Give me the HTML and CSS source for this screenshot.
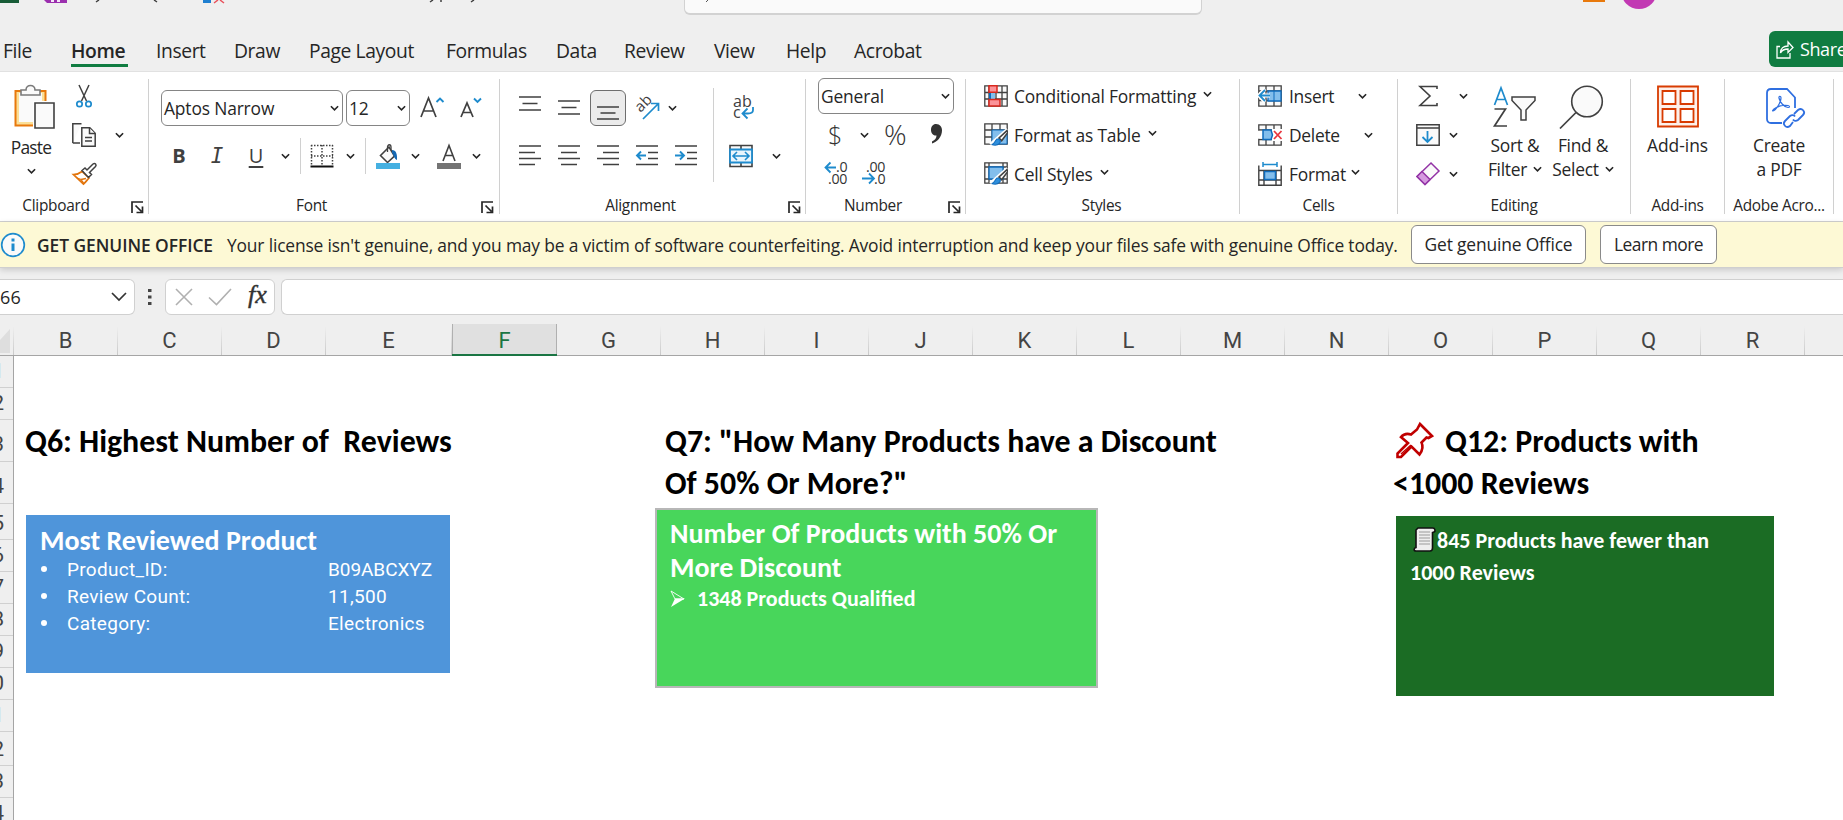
FILE: index.html
```html
<!DOCTYPE html>
<html lang="en">
<head>
<meta charset="utf-8">
<title>Excel</title>
<link rel="stylesheet" href="styles.css">
</head>
<body>
<svg class="defs" width="0" height="0">
  <symbol id="chev" viewBox="0 0 10 6"><path d="M1 1l4 4 4-4" fill="none" stroke="#262626" stroke-width="1.8"/></symbol>
  <symbol id="launch" viewBox="0 0 13 13"><path d="M1 12V1h11M4.500 4.500l6 6M11.500 5.500v6h-6" fill="none" stroke="#262626" stroke-width="1.7"/></symbol>
  <symbol id="brush" viewBox="0 0 16 16"><path d="M15.500 1.500L8 8.500l2.500 2.500 6-8z" fill="#fafafa" stroke="#404040" stroke-width="1.500"/><path d="M1 14.500c3 0 3-3.500 5-5 3-.5 4 2 2.500 4-2 2-5 2-7.500 1z" fill="#2f8fdc" stroke="#0f6cbd"/></symbol>
</svg>

<header class="titlebar">
  <svg class="quick" width="500" height="4" viewBox="0 0 500 4">
    <path d="M0 0h19v3H0z" fill="#185c37"/><path d="M44 0h23v3H47z" fill="#9b2fae"/><path d="M51 0h3v2h-3zM57 0h3v2h-3z" fill="#f5e6f7"/>
    <path d="M99 0l-3 2M154 0l3 2M433 0l-3 2M441 0v2M474 0l-3 2" stroke="#404040" stroke-width="1.500" fill="none"/>
    <path d="M203 0h8v3h-8z" fill="#1f7fd0"/><path d="M218 0l-4 3M220 0l4 3" stroke="#e8505b" stroke-width="1.500"/>
  </svg>
  <div class="search"><svg width="4" height="2"><path d="M3 0L1 2" stroke="#555"/></svg></div>
  <i class="warn"></i><i class="avatar"></i>
</header>

<nav class="tabs">
  <span>File</span><span class="on">Home</span><span>Insert</span><span>Draw</span><span>Page Layout</span><span>Formulas</span><span>Data</span><span>Review</span><span>View</span><span>Help</span><span>Acrobat</span>
  <button class="share"><svg width="18" height="19" viewBox="0 0 18 19"><path d="M4 6.500H1V18h13v-5M4.500 13c0-5 3-7 7.500-7V2l5 5.500-5 5V9c-4 0-6 1-7.500 4z" fill="none" stroke="#fff" stroke-width="1.300"/></svg>Share</button>
</nav>

<section class="ribbon">
  <div class="group clip">
    <div class="body">
      <div class="big paste">
        <svg width="42" height="46" viewBox="0 0 42 46"><path d="M1.500 7h30v34.500h-30z" fill="#fbdf97" stroke="#e8790c" stroke-width="2"/><path d="M5 9h23v29H5z" fill="#fafafa"/><path d="M7 11V6h5c0-6 9-6 9 0h5v5z" fill="#fafafa" stroke="#7a7a7a" stroke-width="1.600"/><path d="M19 17h22v28H19z" fill="#fff"/><path d="M21 19h19v25H21z" fill="#fafafa" stroke="#404040" stroke-width="1.600"/></svg>
        <span>Paste</span>
        <svg class="chev"><use href="#chev"/></svg>
      </div>
      <div class="three">
        <div class="row"><svg width="24" height="24" viewBox="0 0 24 24"><path d="M7 1l7.500 16M17 1L9.500 17" stroke="#404040" stroke-width="1.500"/><g fill="#fff" stroke="#1e8bcd" stroke-width="1.700"><circle cx="7.500" cy="20" r="2.700"/><circle cx="16.500" cy="20" r="2.700"/></g></svg></div>
        <div class="row"><svg width="24" height="24" viewBox="0 0 24 24"><g fill="#fafafa" stroke="#404040" stroke-width="1.500"><path d="M.8 20V.8H9.500M.8 20H8"/><path d="M9.800 4.800h8l5.400 5.400v13H9.800z"/><path d="M17.500 5v5.500H23M13 14.500h7M13 18h7"/></g></svg><svg class="chev"><use href="#chev"/></svg></div>
        <div class="row"><svg width="25" height="24" viewBox="0 0 25 24"><path d="M1.500 12.500c4 0 6-1 8.500-3l7 6.500c-2 2-3 4-5.500 6z" fill="#fff" stroke="#e2740c" stroke-width="1.700"/><path d="M5 16l4 1.500 2.500 3.500M9 17.500l5-1" fill="none" stroke="#e2740c" stroke-width="1.300"/><path d="M10 8.500l3-2.500 2 2 6-6c2-1.500 4 .5 2.500 2.500l-6 6 2 2-3 3z" fill="#fff" stroke="#404040" stroke-width="1.500"/></svg></div>
      </div>
    </div>
    <footer><span>Clipboard</span><svg class="launch"><use href="#launch"/></svg></footer>
  </div>

  <div class="group font">
    <div class="two">
      <div class="row"><div class="combo name">Aptos Narrow<svg class="chev"><use href="#chev"/></svg></div><div class="combo size">12<svg class="chev"><use href="#chev"/></svg></div>
        <svg class="grow" width="24" height="24" viewBox="0 0 24 24"><path d="M1 21L8.500 2l7.500 19M3.500 15h10" fill="none" stroke="#404040" stroke-width="1.700"/><path d="M16.500 6L20 2.500 23.500 6" fill="none" stroke="#1e8bcd" stroke-width="1.900"/></svg>
        <svg class="shrink" width="22" height="24" viewBox="0 0 22 24"><path d="M1 21L7 7l6 14M3 16.500h8" fill="none" stroke="#404040" stroke-width="1.700"/><path d="M14 2.500l3.500 3.500L21 2.500" fill="none" stroke="#1e8bcd" stroke-width="1.900"/></svg></div>
      <div class="row r2"><b>B</b><em>I</em><u>U</u><svg class="chev c1"><use href="#chev"/></svg><i class="vline v1"></i>
        <svg class="border" width="24" height="24" viewBox="0 0 24 24"><path d="M1 1.500h22M1.500 1v20M22.500 1v20M12 1v20M1 12h22" fill="none" stroke="#404040" stroke-width="1.500" stroke-dasharray="1.500 1.500"/><path d="M.5 22.500h23" stroke="#111" stroke-width="2"/></svg><svg class="chev c2"><use href="#chev"/></svg><i class="vline v2"></i>
        <svg class="fill" width="24" height="25" viewBox="0 0 24 25"><path d="M4.500 11.500L13 3l5.500 9-7 6.500z" fill="#fafafa" stroke="#404040" stroke-width="1.600"/><path d="M11.500 8V3c0-3 3.500-3 3.500 0v3" fill="none" stroke="#404040" stroke-width="1.300"/><path d="M16 6c4 0 5.500 4 5 10-3-1-3-5-5-7z" fill="#1668b3"/><path d="M0 19h24v6H0z" fill="#45b0e1"/></svg><svg class="chev c3"><use href="#chev"/></svg>
        <svg class="color" width="24" height="25" viewBox="0 0 24 25"><path d="M6 17l6-15.500L18 17M8 11.500h8" fill="none" stroke="#404040" stroke-width="1.600"/><path d="M0 19h24v6H0z" fill="#747474"/></svg><svg class="chev c4"><use href="#chev"/></svg></div>
    </div>
    <footer><span>Font</span><svg class="launch"><use href="#launch"/></svg></footer>
  </div>

  <div class="group align">
    <div class="two">
      <div class="row"><svg class="al" viewBox="0 0 22 24"><path d="M0 1h22M3.500 7.500h15M0 14h22"/></svg><svg class="al" viewBox="0 0 22 24"><path d="M0 5h22M3.500 11.500h15M0 18h22"/></svg><span class="sel"><svg class="al" viewBox="0 0 22 24"><path d="M0 11h22M3.500 17h15M0 23h22"/></svg></span>
        <svg class="orient" width="26" height="26" viewBox="0 0 26 26"><text transform="translate(6.500 18) rotate(-45)" class="glyph">ab</text><path d="M9 24L24 9M17 8.500h7.500V16" fill="none" stroke="#1e8bcd" stroke-width="1.700"/></svg><svg class="chev c5"><use href="#chev"/></svg></div>
      <div class="row"><svg class="al" viewBox="0 0 22 24"><path d="M0 2h22M0 8.500h16M0 14.500h22M0 20.500h16"/></svg><svg class="al" viewBox="0 0 22 24"><path d="M0 2h22M3 8.500h16M0 14.500h22M3 20.500h16"/></svg><svg class="al" viewBox="0 0 22 24"><path d="M0 2h22M6 8.500h16M0 14.500h22M6 20.500h16"/></svg><svg class="al" viewBox="0 0 22 24"><path d="M0 2h22M12 8.500h10M12 14.500h10M0 20.500h22"/><path class="blue" d="M10 11.500H1M5 7.500l-4 4 4 4"/></svg><svg class="al" viewBox="0 0 22 24"><path d="M0 2h22M12 8.500h10M12 14.500h10M0 20.500h22"/><path class="blue" d="M0 11.500h9M5 7.500l4 4-4 4"/></svg></div>
    </div>
    <i class="mid"></i>
    <div class="two wrapcol">
      <div class="row"><svg width="26" height="26" viewBox="0 0 26 26"><text x="4" y="12" class="glyph wide">ab</text><text x="4" y="23" class="glyph wide">c</text><path d="M24 12v3c0 3-2 3.500-5 3.500h-5M18.500 13.500l-5 5 5 5" fill="none" stroke="#1e8bcd" stroke-width="1.800"/></svg></div>
      <div class="row"><svg width="24" height="24" viewBox="0 0 24 24"><path d="M1 1.500h22v21H1zM12 1v4M12 19v4" fill="#fafafa" stroke="#404040" stroke-width="1.600"/><path d="M1 5.500h22v13H1z" fill="#eaf5fc" stroke="#1e8bcd" stroke-width="1.800"/><path d="M4.500 12h15M8 8l-4 4 4 4M16 8l4 4-4 4" fill="none" stroke="#1e8bcd" stroke-width="1.600"/></svg><svg class="chev"><use href="#chev"/></svg></div>
    </div>
    <footer><span>Alignment</span><svg class="launch"><use href="#launch"/></svg></footer>
  </div>

  <div class="group number">
    <div class="three">
      <div class="row"><div class="combo gen">General<svg class="chev"><use href="#chev"/></svg></div></div>
      <div class="row"><span class="dollar">$</span><svg class="chev"><use href="#chev"/></svg><span class="pct">%</span><svg class="comma" width="13" height="20" viewBox="0 0 13 20"><path d="M6 0c4 0 6 3 6 6.500C12 13 7 18 2 19.500v-2c3-1.500 4.500-3.500 4.500-6C3 12 1 9 1 6c0-3.500 2-6 5-6z" fill="#333"/></svg></div>
      <div class="row dec"><svg width="26" height="25" viewBox="0 0 26 25"><text x="12" y="11" class="num">.0</text><text x="4" y="23" class="num">.00</text><path d="M12 6.500H1.500M6.500 1.500l-5 5 5 5" fill="none" stroke="#1e8bcd" stroke-width="1.800"/></svg><svg width="26" height="25" viewBox="0 0 26 25"><text x="4" y="11" class="num">.00</text><text x="12" y="23" class="num">.0</text><path d="M0 17.500h11.500M7 12.500l5 5-5 5" fill="none" stroke="#1e8bcd" stroke-width="1.800"/></svg></div>
    </div>
    <footer><span>Number</span><svg class="launch"><use href="#launch"/></svg></footer>
  </div>

  <div class="group styles">
    <div class="three">
      <div class="row"><svg width="24" height="22" viewBox="0 0 24 22"><path d="M.8.800h22.400v20.400H.8zM5 1v20M18 1v20M1 7.500h22M1 14h22M12 1v20" fill="#fafafa" stroke="#404040" stroke-width="1.300"/><path d="M5 7h6v7H5z" fill="#83beec"/><path d="M5 7h2v7H5z" fill="#0f6cbd"/><path d="M5 .8h8v6.500H5zM5 14.500h11v6.500H5z" fill="#fb9399" stroke="#d9281e" stroke-width="1.500"/></svg><span>Conditional Formatting</span><svg class="chev"><use href="#chev"/></svg></div>
      <div class="row"><svg width="24" height="23" viewBox="0 0 24 23"><path d="M.8.800h22.400v20.400H.8zM8 1v20M16 1v20M1 7h22M1 14h22" fill="#fafafa" stroke="#404040" stroke-width="1.300"/><path d="M8 7h15v14H8z" fill="#83beec" stroke="#0f6cbd"/><path d="M24 7L7 22" stroke="#fff" stroke-width="5"/><use href="#brush" x="6" y="6" width="18" height="17"/></svg><span>Format as Table</span><svg class="chev"><use href="#chev"/></svg></div>
      <div class="row"><svg width="24" height="23" viewBox="0 0 24 23"><path d="M.8.800h22.400v20.400H.8zM5 1v20M19 1v20M1 5h22M1 17h22" fill="#fafafa" stroke="#404040" stroke-width="1.300"/><path d="M5 5h14v12H5z" fill="#83beec" stroke="#0f6cbd" stroke-width="1.300"/><path d="M24 7L7 22" stroke="#fff" stroke-width="5"/><use href="#brush" x="6" y="6" width="18" height="17"/></svg><span>Cell Styles</span><svg class="chev"><use href="#chev"/></svg></div>
    </div>
    <footer><span>Styles</span></footer>
  </div>

  <div class="group cells">
    <div class="three">
      <div class="row"><svg width="24" height="22" viewBox="0 0 24 22"><path d="M.8.800h22.400v20.400H.8zM8 1v20M16 1v20M1 6h22M1 15.500h22" fill="#fafafa" stroke="#404040" stroke-width="1.300"/><path d="M10 6h13v10H10z" fill="#83beec" stroke="#0f6cbd" stroke-width="1.300"/><path d="M16 6v10" stroke="#0f6cbd"/><path d="M1 10.500h11M7 4l-6 6.500L7 17" stroke="#fff" stroke-width="4" fill="none"/><path d="M12 10.500H1.500M7 5l-5.500 5.500L7 16" fill="none" stroke="#1e8bcd" stroke-width="1.800"/></svg><span>Insert</span><svg class="chev far"><use href="#chev"/></svg></div>
      <div class="row"><svg width="24" height="22" viewBox="0 0 24 22"><path d="M.8.800h22.400v20.400H.8zM8 1v20M16 1v20M1 6h22M1 15.500h22" fill="#fafafa" stroke="#404040" stroke-width="1.300"/><path d="M0 6.700h5v8H0zM14 5h10v12H14z" fill="#fff"/><path d="M5 6h8l1.500 5-1.500 4.500H5z" fill="#83beec" stroke="#0f6cbd" stroke-width="1.500"/><path d="M16 7l7.500 8M23.500 7L16 15" stroke="#e8363f" stroke-width="1.800"/></svg><span>Delete</span><svg class="chev far"><use href="#chev"/></svg></div>
      <div class="row"><svg width="24" height="24" viewBox="0 0 24 24"><path d="M.8 3.500v19.700h22.400V3.500M6 8v15M18 8v15M1 8.500h22M1 18h22" fill="none" stroke="#404040" stroke-width="1.400"/><path d="M6.500 9.500h11v8h-11z" fill="#83beec" stroke="#0f6cbd" stroke-width="1.500"/><path d="M5 2.500h14M5 0v5M19 0v5" stroke="#1e8bcd" stroke-width="1.500"/></svg><span>Format</span><svg class="chev"><use href="#chev"/></svg></div>
    </div>
    <footer><span>Cells</span></footer>
  </div>

  <div class="group editing">
    <div class="three">
      <div class="row"><svg width="24" height="22" viewBox="0 0 24 22"><path d="M21 4V1.500H4l10 9.500L4 20.500h17V18" fill="none" stroke="#404040" stroke-width="1.600"/></svg><svg class="chev s1"><use href="#chev"/></svg></div>
      <div class="row"><svg width="24" height="22" viewBox="0 0 24 22"><path d="M.8.800h22.400v20.400H.8zM1 4h22" fill="#fafafa" stroke="#404040" stroke-width="1.500"/><path d="M11.500 7v11M6.500 13l5 5 5-5" fill="none" stroke="#1e8bcd" stroke-width="1.800"/></svg><svg class="chev s2"><use href="#chev"/></svg></div>
      <div class="row"><svg width="24" height="24" viewBox="0 0 24 24"><path d="M1 14.500L15 1l8 8L9 22.500z" fill="#fafafa" stroke="#9333a6" stroke-width="1.500"/><path d="M1 14.500L6 9.500l8 8-5 5z" fill="#d59adf" stroke="#9333a6" stroke-width="1.500"/></svg><svg class="chev s2"><use href="#chev"/></svg></div>
    </div>
    <div class="big sort">
      <svg width="44" height="44" viewBox="0 0 44 44"><path d="M1.500 20L8 3l6.500 17M3.500 14.500h9" fill="none" stroke="#1e8bcd" stroke-width="1.700"/><path d="M1.500 24h11L1.500 41H14" fill="none" stroke="#404040" stroke-width="1.700"/><path d="M19 12h23v3.500L33 25v10h-5V25l-9-9.500z" fill="#fafafa" stroke="#404040" stroke-width="1.500"/></svg>
      <span>Sort &amp;</span><span>Filter <svg class="chev"><use href="#chev"/></svg></span>
    </div>
    <div class="big find">
      <svg width="46" height="44" viewBox="0 0 46 44"><circle cx="29" cy="16.500" r="15.300" fill="#fafafa" stroke="#404040" stroke-width="1.600"/><path d="M18 27.500L2 43.500" stroke="#404040" stroke-width="1.700"/></svg>
      <span>Find &amp;</span><span>Select <svg class="chev"><use href="#chev"/></svg></span>
    </div>
    <footer><span>Editing</span></footer>
  </div>

  <div class="group addins">
    <div class="big">
      <svg width="42" height="44" viewBox="0 0 42 44"><path d="M1 1.500h40v40H1z" fill="#fdf0ea" stroke="#d83b01" stroke-width="1.800"/><path d="M5.500 6h13v13h-13zM23.500 6h13v13h-13zM5.500 24h13v13h-13zM23.500 24h13v13h-13z" fill="#fff" stroke="#d83b01" stroke-width="1.800"/></svg>
      <span>Add-ins</span>
    </div>
    <footer><span>Add-ins</span></footer>
  </div>

  <div class="group pdf">
    <div class="big">
      <svg width="40" height="44" viewBox="0 0 40 44"><g fill="none" stroke="#2f6fe0" stroke-width="1.800"><path d="M16 38H5c-2.500 0-4-1.500-4-4V8c0-2.500 1.500-4 4-4h16l8 8.500V23"/><path d="M7 26c3-.5 8-9 8-13 0-2.500-2.500-2-2 0 1 4.500 5 9 9 9.500 2 0 2-1.500 0-2-5-1-11 1-14 3.500-1 1-2 2-1 2z" stroke-width="1.200"/><path d="M28 29l4-4c4-3 8 2 5 5l-5 5c-2 1.500-4 1-5-.5M27 37l-3 4c-4 3-8-2-5-5l5-5c2-1.500 4-1 5 .5"/></g></svg>
      <span>Create</span><span>a PDF</span>
    </div>
    <footer><span>Adobe Acro...</span></footer>
  </div>
</section>

<div class="notice">
  <svg width="26" height="26" viewBox="0 0 26 26"><circle cx="13" cy="13" r="11.300" fill="#fafafa" stroke="#1e8bcd" stroke-width="1.700"/><path d="M13 6.500v3M13 11.500V19" stroke="#1e8bcd" stroke-width="3"/></svg>
  <b>GET GENUINE OFFICE</b><span>Your license isn't genuine, and you may be a victim of software counterfeiting. Avoid interruption and keep your files safe with genuine Office today.</span>
  <button class="get">Get genuine Office</button><button class="learn">Learn more</button>
</div>

<div class="formula">
  <div class="namebox"><span>66</span><svg width="16" height="10" viewBox="0 0 16 10"><path d="M1 1l7 7 7-7" fill="none" stroke="#333" stroke-width="1.700"/></svg></div>
  <svg width="4" height="18" viewBox="0 0 4 18"><path d="M0 1h3.500v3H0zM0 7.500h3.500v3H0zM0 14h3.500v3H0z" fill="#444"/></svg>
  <div class="fx"><svg width="18" height="18" viewBox="0 0 18 18"><path d="M1 1l16 16M17 1L1 17" stroke="#b0b0b0" stroke-width="1.600"/></svg><svg width="24" height="18" viewBox="0 0 24 18"><path d="M1 9.500L8.500 16.500 23 1" fill="none" stroke="#b0b0b0" stroke-width="1.600"/></svg><i>fx</i></div>
  <div class="input"></div>
</div>

<div class="cols"><div class="corner"><svg width="10" height="24"><path d="M10 0v24H0V11z" fill="#dedede"/></svg></div><div>B</div><div>C</div><div>D</div><div class="e">E</div><div class="f">F</div><div>G</div><div>H</div><div>I</div><div>J</div><div>K</div><div>L</div><div>M</div><div>N</div><div>O</div><div>P</div><div>Q</div><div>R</div><div></div></div>

<main class="grid">
  <div class="rows"><div>1</div><div>2</div><div class="tall">3</div><div class="tall">4</div><div class="r5">5</div><div>6</div><div>7</div><div>8</div><div>9</div><div>10</div><div>11</div><div class="r12">12</div><div>13</div><div>14</div></div>
  <div class="sheet">
    <h2 class="q6">Q6: Highest Number of&nbsp; Reviews</h2>
    <h2 class="q7">Q7: "How Many Products have a Discount<br>Of 50% Or More?"</h2>
    <h2 class="q12"><svg width="38" height="37" viewBox="0 0 38 37"><path d="M24 2l12 12-3.500 2-2-.5-5 5c2 4 1 8-2 12l-8-8L5 35H1.500v-3.500L12 21 5 15c3-3.500 7-3.500 10-2.500l6-5z" fill="none" stroke="#c00000" stroke-width="2.600"/><path d="M5 32l10-9" stroke="#c00000" stroke-width="1.500"/></svg>Q12: Products with<br>&lt;1000 Reviews</h2>
    <article class="card blue">
      <h3>Most Reviewed Product</h3>
      <ul><li><span>Product_ID:</span><span class="id">B09ABCXYZ</span></li><li><span>Review Count:</span><span>11,500</span></li><li><span>Category:</span><span>Electronics</span></li></ul>
    </article>
    <article class="card green">
      <h3>Number Of Products with 50% Or<br>More Discount</h3>
      <p><svg width="15" height="17" viewBox="0 0 15 17"><path d="M1 1l13 8-9 0z" fill="none" stroke="#fff" stroke-width=".9"/><path d="M5 8.500h10L1 17z" fill="#fff"/></svg>1348 Products Qualified</p>
    </article>
    <article class="card dark">
      <p><svg width="24" height="25" viewBox="0 0 24 25"><path d="M5 1h14.500c3 0 3 3.500 1.500 4l-1.500.5V21c0 2-1 3-2.500 3H3c-2.500 0-2.500-3 0-3.500V3z" fill="#eee" stroke="#111" stroke-width="1.600"/><path d="M6 5h11M6 8h11M6 11h11M6 14h11M6 17h11" stroke="#999" stroke-width="1.200"/></svg>845 Products have fewer than<br>1000 Reviews</p>
    </article>
  </div>
</main>
</body>
</html>
```
FILE: styles.css
```css
* { box-sizing: border-box; }
body { margin: 0; width: 1843px; height: 820px; overflow: hidden; background: #fff; font: 17.4px/24px "Open Sans", "Noto Sans", sans-serif; letter-spacing: -.28px; color: #262626; }
svg { display: block; flex: none; overflow: visible; }
.defs { position: absolute; }
button { font: inherit; letter-spacing: inherit; color: inherit; padding: 0; }
.chev { width: 9px; height: 6px; }
.launch { width: 13px; height: 13px; }

.titlebar { display: flex; align-items: flex-start; height: 31px; background: #efefef; }
.quick { width: 500px; }
.search { width: 518px; height: 15px; margin-left: 184px; padding-left: 20px; background: #fafafa; border: 1px solid #d2d2d2; border-top: 0; border-bottom-width: 2px; border-radius: 0 0 6px 6px; }
.warn { width: 22px; height: 2px; margin-left: 381px; background: #e8790c; }
.avatar { width: 36px; height: 9px; margin-left: 16px; background: #c239b3; clip-path: circle(18px at 50% -9px); }

.tabs { display: grid; grid-template-columns: 69px 84px 78px 75px 137px 110px 68px 90px 72px 68px 1fr 74px; height: 41px; padding-left: 3px; background: #efefef; border-bottom: 1px solid #e1e1e1; font-size: 19.3px; line-height: 40px; letter-spacing: -.4px; }
.tabs span { height: 36px; }
.tabs .on { justify-self: start; font-weight: 600; width: 57px; margin-left: -1px; border-bottom: 3px solid #107c41; }
.share { display: flex; align-items: center; gap: 6px; height: 36px; padding-left: 7px; background: #107c41; border: 0; border-radius: 6px 0 0 6px; color: #fff; font-size: 18px; overflow: hidden; }

.ribbon { display: flex; height: 150px; background: #fff; border-bottom: 1px solid #d0d0d0; padding-top: 7px; }
.group { display: grid; grid-template-rows: 112px 22px; align-content: start; height: 135px; border-right: 1px solid #d0d0d0; flex: none; }
.group footer { grid-column: 1 / -1; display: flex; justify-content: center; line-height: 22px; font-size: 15.4px; letter-spacing: -.28px; padding-top: 4px; position: relative; }
.group footer .launch { position: absolute; right: 4px; bottom: -1px; }
.row { display: flex; align-items: center; }
.three { display: grid; grid-template-rows: 39px 39px 39px; margin-top: -3px; align-content: start; }
.two { display: grid; grid-template-rows: 48px 48px; margin-top: 5px; align-content: start; }
.big { display: flex; flex-direction: column; align-items: center; padding-top: 6px; white-space: nowrap; }
.big span { display: flex; align-items: center; gap: 6px; }
.combo { display: flex; align-items: center; justify-content: space-between; height: 36px; padding: 0 3px 0 2px; border: 1px solid #858585; border-radius: 6px; letter-spacing: -.15px; }

.clip { width: 149px; }
.clip .body { display: flex; }
.paste { width: 62px; padding-top: 5px; }
.paste > svg:first-child { margin-left: 8px; }
.paste span { line-height: 34px; letter-spacing: -.8px; }
.paste .chev { margin-top: 4px; }
.clip .three { margin-left: 10px; }
.clip .three .chev { margin-left: 19px; }
.clip footer { padding-right: 36px; }

.font { width: 351px; padding-left: 12px; }
.name { width: 182px; }
.size { width: 64px; margin-left: 3px; }
.grow { margin-left: 10px; }
.shrink { margin-left: 16px; }
.r2 b, .r2 em, .r2 u { font-size: 20px; line-height: 24px; color: #404040; text-align: center; letter-spacing: 0; }
.r2 b { width: 16px; margin-left: 10px; }
.r2 em { width: 16px; margin-left: 22px; font: italic 21px/24px "DejaVu Sans Mono", monospace; }
.r2 u { width: 16px; margin-left: 23px; text-underline-offset: 3px; text-decoration-thickness: 1.500px; }
.c1 { margin-left: 17px; }
.vline { width: 1px; height: 36px; background: #d0d0d0; }
.v1 { margin-left: 10px; }
.border { margin-left: 9px; }
.c2 { margin-left: 12px; }
.v2 { margin-left: 10px; }
.fill { margin-left: 10px; }
.c3 { margin-left: 11px; }
.color { margin-left: 17px; }
.c4 { margin-left: 11px; }
.font footer { margin-left: -12px; padding-right: 25px; }
.font footer .launch { right: 5px; }

.align { width: 306px; padding-left: 19px; grid-template-columns: 194px 1px 1fr; }
.al { width: 22px; height: 24px; margin-right: 17px; fill: none; stroke: #404040; stroke-width: 1.700; }
.al .blue { stroke: #1e8bcd; stroke-width: 1.900; }
.sel { width: 36px; height: 36px; margin-left: -7px; padding: 5px 0 0 6px; border: 1px solid #6e6e6e; border-radius: 6px; background: #ebebeb; }
.orient { margin-left: 8px; }
.glyph { font: 15px "Open Sans", sans-serif; letter-spacing: 0; fill: #404040; }
.wide { font-size: 16px; }
.c5 { margin-left: 8px; }
.mid { width: 1px; height: 94px; margin-top: 9px; background: #d0d0d0; }
.wrapcol { margin-left: 15px; }
.wrapcol .chev { margin-left: 19px; }
.align footer { margin-left: -19px; padding-right: 24px; }

.number { width: 160px; padding-left: 12px; }
.gen { width: 136px; padding-left: 2px; }
.dollar, .pct { font: 300 25px/30px "Open Sans", sans-serif; color: #333; }
.dollar { width: 14px; margin: -2px 0 0 10px; }
.number .row > .chev { margin-left: 18px; }
.pct { width: 24px; margin: -2px 0 0 15px; font-size: 28px; letter-spacing: 0; }
.comma { margin: -2px 0 0 22px; }
.dec { gap: 12px; padding-left: 6px; }
.num { font: 14.200px "Open Sans", sans-serif; fill: #333; letter-spacing: -.3px; }
.number footer { margin-left: -12px; padding-right: 25px; }

.styles { width: 274px; padding-left: 18px; }
.styles .row span { margin-left: 6px; letter-spacing: -.2px; }
.styles .chev { margin-left: 7px; margin-top: -3px; }
.styles footer { margin-left: -18px; padding-right: 2px; }

.cells { width: 158px; padding-left: 18px; }
.cells .row span { margin-left: 7px; }
.cells .chev { margin-left: 5px; margin-top: -3px; }
.cells .far { margin-left: 24px; margin-top: 0; }
.cells footer { margin-left: -18px; }

.editing { width: 233px; grid-template-columns: 83px 70px 1fr; }
.editing .three { padding-left: 18px; }
.s1 { margin-left: 19px; }
.s2 { margin-left: 9px; }
.big > svg:first-child { margin-bottom: 4px; }
.paste > svg:first-child { margin-bottom: 0; }
.sort { width: 68px; }
.find { width: 66px; margin-left: -1px; }
.find > svg:first-child { margin-left: -4px; }
.editing footer { padding-right: 0; }
.addins { width: 94px; }
.addins .big span { letter-spacing: 0; }
.pdf { width: 109px; }
.pdf .big > svg { margin-left: 14px; }

.notice { display: flex; align-items: center; height: 46px; background: #fdf9d5; border-bottom: 1px solid #cfcfcf; letter-spacing: -.16px; white-space: nowrap; box-shadow: 0 2px 6px rgba(0,0,0,.16); position: relative; }
.notice b { width: 190px; margin-left: 11px; font-weight: 600; letter-spacing: -.05px; }
.notice span { width: 1184px; }
.notice button { height: 39px; margin-bottom: 1px; background: #fff; border: 1px solid #8a8a8a; border-radius: 6px; }
.get { width: 175px; }
.learn { width: 117px; margin-left: 14px; letter-spacing: -.5px; }

.formula { display: flex; align-items: flex-start; height: 56px; padding-top: 11px; background: #efefef; }
.formula > div { height: 36px; background: #fff; border: 1px solid #d0d0d0; border-radius: 6px; display: flex; align-items: center; }
.formula .namebox { width: 135px; justify-content: space-between; padding-right: 7px; letter-spacing: .3px; font-size: 18px; border-left: 0; border-radius: 0 6px 6px 0; }
.formula > svg { margin: 9px 0 0 13px; }
.fx { width: 110px; margin-left: 13px; padding-left: 9px; gap: 15px; }
.fx i { font: italic 26px/30px "Liberation Serif", serif; letter-spacing: 0; margin: -4px 0 0 1px; color: #333; -webkit-text-stroke: .4px #333; }
.formula .input { flex: 1; margin-left: 6px; border-right: 0; border-radius: 6px 0 0 6px; }

.cols { display: grid; grid-template-columns: 14px 104px 104px 104px 126px 105px repeat(13, 104px); height: 32px; background: #efefef; border-bottom: 1px solid #a5a5a5; font: 22px/33px Roboto, sans-serif; letter-spacing: 0; text-align: center; color: #444; }
.cols div { border-right: 1px solid; border-image: linear-gradient(#efefef 10%, #c8c8c8) 1; height: 31px; }
.cols .corner svg { margin-top: 5px; }
.cols .f { height: 32px; background: #e0e0e0; border: 0; border-bottom: 2px solid #1a7543; box-shadow: inset 1px 0 #b0b0b0, inset -1px 0 #b0b0b0; border-image: none; color: #1a7543; }

.grid { display: flex; height: 465px; }
.rows { width: 14px; background: #efefef; border-right: 1px solid #a5a5a5; font: 21px/30px Roboto, sans-serif; letter-spacing: 0; color: #444; }
.rows div { display: flex; justify-content: flex-end; align-items: flex-end; height: 32px; padding: 0 9px 1px 0; border-bottom: 1px solid #d0d0d0; overflow: hidden; }
.rows .tall { height: 42px; padding-bottom: 2px; }
.rows .r5 { height: 36px; }
.rows .r12 { height: 34px; }

.sheet { position: relative; flex: 1; font-family: Carlito, Lato, sans-serif; letter-spacing: 0; }
h2, h3, p, ul { margin: 0; padding: 0; list-style: none; }
.sheet h2 { position: absolute; top: 65px; font-size: 31.900px; line-height: 42px; color: #000; white-space: nowrap; }
.sheet .q6 { left: 11px; }
.sheet .q7 { left: 651px; }
.sheet .q12 { left: 1379px; }
.q12 svg { display: inline-block; vertical-align: -7px; margin: -5px 11px 0 3px; }
.card { position: absolute; color: #fff; font-weight: 700; white-space: nowrap; }
.card h3 { font-size: 28px; }
.blue { left: 12px; top: 159px; width: 424px; height: 158px; padding: 9px 0 0 14px; background: #4f95da; }
.blue h3 { line-height: 34px; }
.blue ul { font: 19px/27px Roboto, sans-serif; letter-spacing: .3px; margin-top: -2px; }
.blue li { display: grid; grid-template-columns: 261px 1fr; padding-left: 27px; position: relative; }
.blue li::before { content: ""; position: absolute; left: 1px; top: 10px; width: 6px; height: 6px; border-radius: 50%; background: #fff; }
.blue .id { letter-spacing: -.06px; }
.green { left: 641px; top: 152px; width: 443px; height: 180px; padding: 7px 0 0 13px; background: #48d65b; border: 2px solid #b7b7b7; }
.green h3 { line-height: 34px; }
.green p { display: flex; align-items: center; gap: 12px; font-size: 22px; line-height: 27px; }
.dark { left: 1382px; top: 160px; width: 378px; height: 180px; padding: 9px 0 0 14px; background: #1b6c24; font-size: 22px; line-height: 32px; }
.dark svg { display: inline-block; vertical-align: -4px; margin: -6px 0 0 3px; }
```
